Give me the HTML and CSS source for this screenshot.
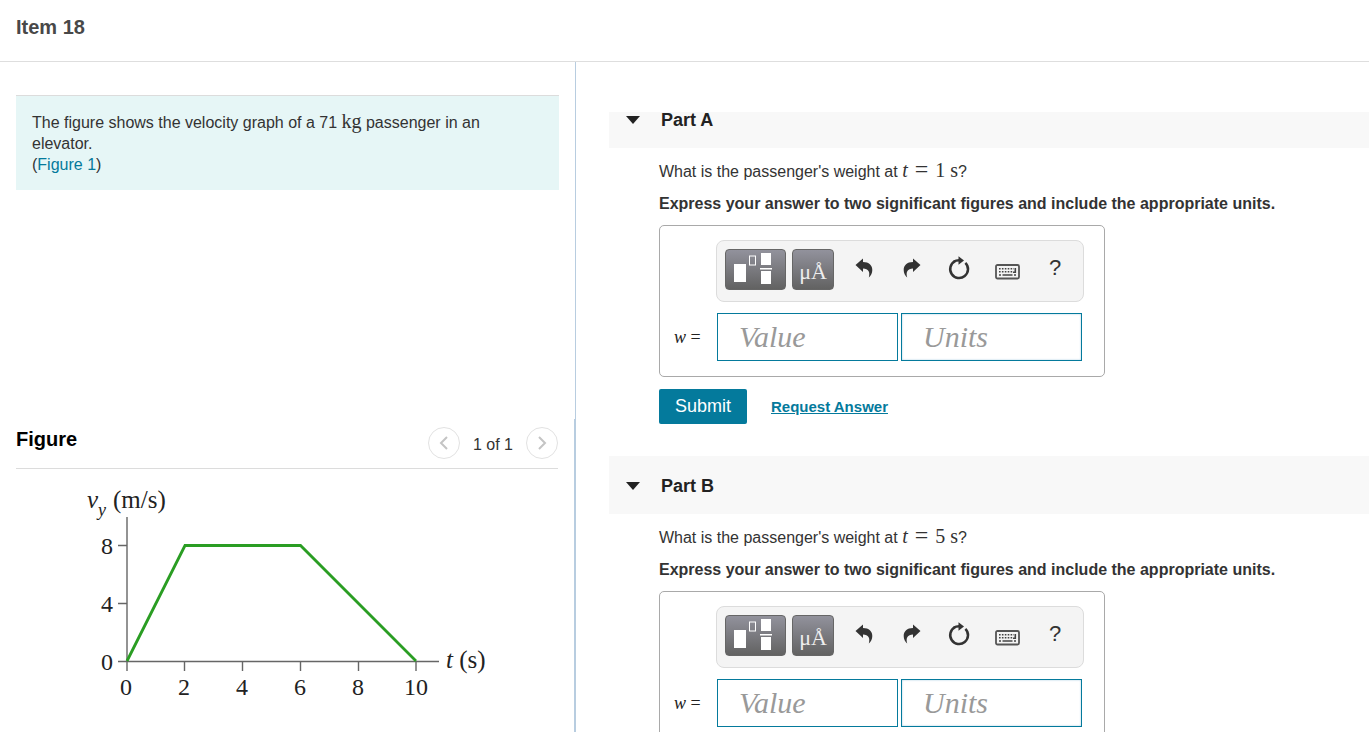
FILE: index.html
```html
<!DOCTYPE html>
<html lang="en">
<head>
    <title>Item 18</title>
    <meta charset="UTF-8">
    <meta name="viewport" content="width=device-width, initial-scale=1.0">
    <link rel="stylesheet" href="styles.css">
</head>
<body>
    <!-- shared icons -->
    <svg class="icon-defs" aria-hidden="true">
        <symbol id="icon-template" viewBox="0 0 61 41">
            <rect x="9" y="15" width="12" height="18" fill="#fff"/>
            <rect x="24.5" y="7" width="6" height="9" fill="none" stroke="#fff"/>
            <rect x="36" y="4" width="10" height="12" fill="#fff"/>
            <rect x="35" y="19" width="12" height="1.5" fill="#fff"/>
            <rect x="36" y="22" width="10" height="13" fill="#fff"/>
        </symbol>
        <symbol id="icon-undo" viewBox="0 0 18 20">
            <path d="M0.5 7 L8 0.5 V4 C14 4 17.3 7.5 17.3 12 C17.3 15 16 17.5 13.8 19.5 C15.3 14 13.5 10.5 8 10.5 V14 Z" fill="#333"/>
        </symbol>
        <symbol id="icon-reset" viewBox="0 0 22 24">
            <path d="M7 5.2 A8.9 8.9 0 1 0 17.4 6.8" fill="none" stroke="#333" stroke-width="2.5"/>
            <path d="M6 5.6 Q8 4.2 11 4.2" fill="none" stroke="#333" stroke-width="2.5"/>
            <path d="M10.5 0.3 L16 4.6 L10.5 8.8 Z" fill="#333"/>
        </symbol>
        <symbol id="icon-keyboard" viewBox="0 0 25 16">
            <rect x="1" y="1" width="23" height="13.5" rx="1.5" fill="#f4f4f4" stroke="#555" stroke-width="1.8"/>
            <path d="M4 4.7 H19 M4 7.7 H18" stroke="#444" stroke-width="1.6" stroke-dasharray="1.6 1.3"/>
            <path d="M4 11 H6 M7.5 11 H17.5 M19 11 H21" stroke="#444" stroke-width="1.4"/>
            <path d="M20.3 4 V8.3 H18" fill="none" stroke="#444" stroke-width="1.6"/>
        </symbol>
    </svg>

    <header class="header">
        <h1>Item 18</h1>
    </header>

    <div class="columns">
        <div class="left">
            <section class="intro">
                <div class="problem">
                    The figure shows the velocity graph of a 71 <span class="math">kg</span> passenger in an elevator.<br>
                    (<a href="#figure">Figure 1</a>)
                </div>
            </section>
            <section class="figure" id="figure">
                <div class="figure-header">
                    <h2>Figure</h2>
                    <div class="pager">
                        <button class="pager-button" aria-label="Previous figure">
                            <svg width="10" height="14" viewBox="0 0 10 14"><path d="M8 1 L2 7 L8 13"/></svg>
                        </button>
                        <span>1 of 1</span>
                        <button class="pager-button" aria-label="Next figure">
                            <svg width="10" height="14" viewBox="0 0 10 14"><path d="M2 1 L8 7 L2 13"/></svg>
                        </button>
                    </div>
                </div>
                <svg class="graph" width="480" height="230" viewBox="0 0 480 230">
                    <path class="axis" d="M111 48 V193 M102 192.5 H423"/>
                    <path class="axis" d="M102 76.5 H111 M102 134.5 H111"/>
                    <path class="axis" d="M111 192 V202 M168.5 192 V202 M226.5 192 V202 M284.5 192 V202 M342.5 192 V202 M400 192 V202"/>
                    <path class="curve" d="M111 192 L169 76.5 H284.5 L400 192"/>
                    <text class="axis-label" x="71" y="39"><tspan class="var">v</tspan><tspan class="sub" dy="8">y</tspan></text>
                    <text class="axis-label" x="97" y="39">(m/s)</text>
                    <text class="axis-label" x="430" y="199"><tspan class="var">t</tspan> (s)</text>
                    <g text-anchor="end">
                        <text x="97" y="85">8</text>
                        <text x="97" y="143">4</text>
                        <text x="97" y="201">0</text>
                    </g>
                    <g text-anchor="middle">
                        <text x="110" y="226">0</text>
                        <text x="168" y="226">2</text>
                        <text x="226" y="226">4</text>
                        <text x="284" y="226">6</text>
                        <text x="342" y="226">8</text>
                        <text x="400" y="226">10</text>
                    </g>
                </svg>
            </section>
        </div>

        <main class="right">
            <section class="part">
                <h2 class="part-header"><span class="arrow"></span>Part A</h2>
                <div class="part-body">
                    <p class="question">What is the passenger's weight at <span class="math"><i>t</i> <span class="eq">=</span> 1 s</span>?</p>
                    <p class="hint">Express your answer to two significant figures and include the appropriate units.</p>
                    <div class="answer">
                        <div class="toolbar">
                            <button class="tool tool-wide" aria-label="Templates"><svg width="61" height="41"><use href="#icon-template"/></svg></button>
                            <button class="tool">μÅ</button>
                            <div class="actions">
                                <button aria-label="Undo"><svg width="18" height="20"><use href="#icon-undo"/></svg></button>
                                <button aria-label="Redo"><svg class="flip" width="18" height="20"><use href="#icon-undo"/></svg></button>
                                <button aria-label="Reset"><svg width="22" height="24"><use href="#icon-reset"/></svg></button>
                                <button aria-label="Keyboard shortcuts"><svg class="keyboard" width="25" height="16"><use href="#icon-keyboard"/></svg></button>
                                <button aria-label="Help">?</button>
                            </div>
                        </div>
                        <label for="valueA"><i>w</i> =</label>
                        <div class="fields">
                            <input type="text" id="valueA" placeholder="Value">
                            <input type="text" class="units" placeholder="Units" aria-label="Units">
                        </div>
                    </div>
                    <div class="submit-row">
                        <button class="submit">Submit</button>
                        <a href="#">Request Answer</a>
                    </div>
                </div>
            </section>

            <section class="part">
                <h2 class="part-header"><span class="arrow"></span>Part B</h2>
                <div class="part-body">
                    <p class="question">What is the passenger's weight at <span class="math"><i>t</i> <span class="eq">=</span> 5 s</span>?</p>
                    <p class="hint">Express your answer to two significant figures and include the appropriate units.</p>
                    <div class="answer">
                        <div class="toolbar">
                            <button class="tool tool-wide" aria-label="Templates"><svg width="61" height="41"><use href="#icon-template"/></svg></button>
                            <button class="tool">μÅ</button>
                            <div class="actions">
                                <button aria-label="Undo"><svg width="18" height="20"><use href="#icon-undo"/></svg></button>
                                <button aria-label="Redo"><svg class="flip" width="18" height="20"><use href="#icon-undo"/></svg></button>
                                <button aria-label="Reset"><svg width="22" height="24"><use href="#icon-reset"/></svg></button>
                                <button aria-label="Keyboard shortcuts"><svg class="keyboard" width="25" height="16"><use href="#icon-keyboard"/></svg></button>
                                <button aria-label="Help">?</button>
                            </div>
                        </div>
                        <label for="valueB"><i>w</i> =</label>
                        <div class="fields">
                            <input type="text" id="valueB" placeholder="Value">
                            <input type="text" class="units" placeholder="Units" aria-label="Units">
                        </div>
                    </div>
                </div>
            </section>
        </main>
    </div>
</body>
</html>
```
FILE: styles.css
```css
* {
    box-sizing: border-box;
}
body {
    font-family: "Liberation Sans", Arial, sans-serif;
    font-size: 16px;
    line-height: 20px;
    color: #333;
    margin: 0;
    height: 100vh;
    display: flex;
    flex-direction: column;
    overflow: hidden;
    background: white;
}
h1, h2, p {
    margin: 0;
}
a {
    color: #047a9c;
}
button {
    font-family: inherit;
    color: inherit;
    padding: 0;
    border: none;
    background: none;
    cursor: pointer;
}
.icon-defs {
    display: none;
}
.header {
    padding: 15px 16px 22px;
    border-bottom: 1px solid #dedede;
}
.header h1 {
    font-size: 20px;
    line-height: 24px;
    color: #484848;
}
.columns {
    flex: 1;
    min-height: 0;
    display: flex;
}

/* left column */
.left {
    width: calc(42% + 1px);
    display: flex;
    flex-direction: column;
}
.intro {
    flex: 8 1 0;
    padding: 0 16px;
    border-right: 1px solid #b8cde0;
}
.problem {
    margin-top: 33px;
    padding: 16px 16px 15px;
    line-height: 21px;
    border-top: 1px solid #dcdcdc;
    background: #e6f6f6;
}
.problem a {
    text-decoration: none;
}
.math {
    font-family: "Liberation Serif", "Times New Roman", serif;
    font-size: 20px;
    line-height: 1px;
}
.math .eq {
    font-size: 24px;
    margin: 0 2px;
}
.figure {
    flex: 7 1 0;
    min-height: 0;
    padding: 0 16px;
    border-right: 2px solid #b8cde0;
}
.figure-header {
    height: 50px;
    display: flex;
    align-items: center;
    justify-content: space-between;
    border-bottom: 1px solid #dcdcdc;
}
.figure-header h2 {
    font-size: 20px;
    line-height: 24px;
    color: #000;
    padding-bottom: 10px;
}
.pager {
    display: flex;
    align-items: center;
    gap: 13px;
    padding-bottom: 2px;
}
.pager span {
    padding-top: 4px;
}
.pager-button {
    width: 32px;
    height: 32px;
    border: 1px solid #e2e2e2;
    border-radius: 50%;
    display: flex;
    align-items: center;
    justify-content: center;
}
.pager-button path {
    fill: none;
    stroke: #c4c4c4;
    stroke-width: 2;
}
.graph {
    display: block;
}
.graph text {
    font-family: "Liberation Serif", "Times New Roman", serif;
    font-size: 24px;
    fill: #222;
}
.graph .axis-label {
    font-size: 25px;
}
.graph .var {
    font-style: italic;
}
.graph .sub {
    font-style: italic;
    font-size: 18px;
}
.axis {
    fill: none;
    stroke: #666;
    stroke-width: 1.4;
}
.curve {
    fill: none;
    stroke: #2a9d23;
    stroke-width: 2.8;
}

/* right column */
.right {
    flex: 1;
    min-width: 0;
    margin: 50px 0 0 33px;
    overflow: hidden;
}
.part:first-child {
    margin-top: -22px;
}
.part-header {
    height: 58px;
    padding: 2px 0 0 17px;
    display: flex;
    align-items: center;
    gap: 21px;
    font-size: 18px;
    color: #222;
    background: #f8f8f8;
}
.arrow {
    border: 7px solid transparent;
    border-top: 8px solid #222;
    border-bottom: none;
}
.part-body {
    padding: 13px 16px 32px 50px;
}
.question {
    line-height: 22px;
    margin-bottom: 11px;
}
.hint {
    font-weight: bold;
    margin-bottom: 11px;
}
.answer {
    width: 446px;
    max-width: 100%;
    padding: 14px 20px 15px 14px;
    border: 1px solid #a9a9a9;
    border-radius: 5px;
    display: grid;
    grid-template-columns: 42px minmax(0, 1fr);
    row-gap: 11px;
    align-items: center;
}
.toolbar {
    grid-column: 2;
    height: 62px;
    padding: 8px 4px 0 8px;
    display: flex;
    align-items: flex-start;
    gap: 6px;
    background: #f4f4f4;
    border: 1px solid #dcdcdc;
    border-radius: 8px;
}
.tool {
    width: 42px;
    height: 41px;
    padding-top: 4px;
    border: 1px solid #666;
    border-radius: 4px;
    background: linear-gradient(#92929c, #626262);
    color: #eee;
    font-family: "Liberation Serif", "Times New Roman", serif;
    font-size: 22px;
    overflow: hidden;
}
.tool-wide {
    width: 61px;
    padding: 0;
    display: flex;
    align-items: center;
    justify-content: center;
}
.tool-wide svg {
    flex: none;
}
.actions {
    flex: 1;
    display: flex;
}
.actions button {
    flex: 1;
    height: 41px;
    padding-bottom: 3px;
    font-size: 22px;
    display: flex;
    align-items: center;
    justify-content: center;
}
.flip {
    transform: scaleX(-1);
}
.keyboard {
    margin-top: 8px;
}
.answer label {
    font-family: "Liberation Serif", "Times New Roman", serif;
    font-size: 18px;
    color: #222;
}
.fields {
    display: flex;
    gap: 3px;
    padding: 0 2px 0 1px;
}
.fields input {
    flex: 1;
    min-width: 0;
    height: 48px;
    padding: 0 21px;
    border: 1px solid #047a9c;
    background: white;
    font-family: "Liberation Serif", "Times New Roman", serif;
    font-size: 30px;
}
.fields .units {
    box-shadow: inset 0 0 2px #9cc4dc;
}
.fields input::placeholder {
    font-style: italic;
    color: #999;
}
.submit-row {
    margin-top: 12px;
    display: flex;
    align-items: center;
    gap: 24px;
}
.submit {
    height: 35px;
    padding: 0 16px;
    border-radius: 2px;
    background: #047a9c;
    color: white;
    font-size: 18px;
}
.submit-row a {
    font-size: 15px;
    font-weight: bold;
}
```
